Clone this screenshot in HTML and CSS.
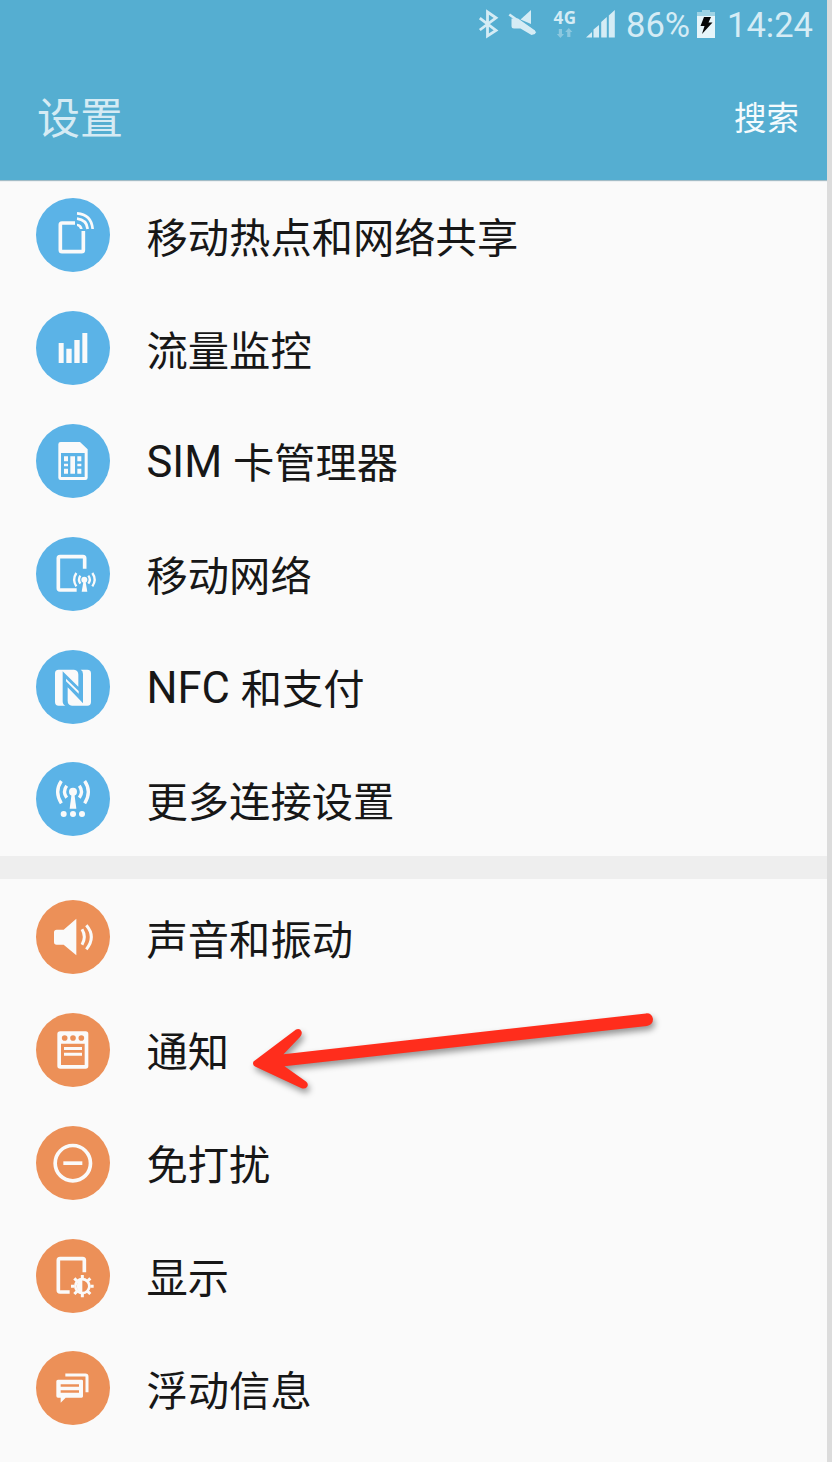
FILE: index.html
```html
<!DOCTYPE html>
<html lang="zh-CN">
<head>
<meta charset="utf-8">
<title>设置</title>
<link rel="stylesheet" href="styles.css">
</head>
<body>
<div class="phone">
  <header class="header">
    <div class="status">
      <svg class="status-icons" viewBox="470 0 150 50">
        <g class="pale">
          <path class="bt" d="M479.8 18.2L496 30.5L487.5 36V12L496 17.8L479.8 30"/>
          <path d="M531 10V24L520.5 19.500Z"/>
          <path d="M511.500 18.500H518L535 30.500V34L531.500 35L520.500 28.500H514Q511.500 28.500 511.500 26Z"/>
          <path class="slash" d="M509.300 14.500L535.500 33"/>
          <path d="M586 37.5L592 32V37.500ZM593.500 37.500V29.500L599 25V37.500ZM601.200 37.500V22L606.800 17V37.500ZM608.800 37.500V15.500L614.800 10V37.500Z"/>
          <path class="data" d="M558.800 29H562V34H564L560.400 38L556.800 34H558.800ZM567.200 37V32H565.200L568.800 28L572.400 32H570.400V37Z"/>
        </g>
        <text class="net" x="553.500" y="24" textLength="22.500">4G</text>
      </svg>
      <span class="percent">86%</span>
      <svg class="battery" viewBox="0 0 20 30">
        <path class="cap" d="M1 2H6V0H14V2H19V7H1Z"/>
        <path class="cell" d="M1 6H19V28H1Z"/>
        <path class="bolt" d="M8 7H15L12.500 12.500H16.500L6 24L8.500 16H4.500Z"/>
      </svg>
      <span class="time">14:24</span>
    </div>
    <div class="titlebar"><h1 class="title">设置</h1><a class="search">搜索</a></div>
  </header>
  <main>
    <section class="list blue">
      <div class="row"><svg class="icon" viewBox="30 24 222 222">
        <circle class="disc" cx="141" cy="135" r="111"/>
        <path class="line w11" d="M147 99H108Q103 99 103 104V180Q103 185 108 185H167Q172 185 172 180V123"/>
        <path class="line w8" d="M153 86Q182 89 185 117M153 70Q196 73 200 117"/>
        <path class="solid" d="M153 101Q168 102 170 117H162Q160 109 153 108Z"/>
      </svg><span class="label">移动热点和网络共享</span></div>
      <div class="row"><svg class="icon" viewBox="30 363 222 222">
        <circle class="disc" cx="141" cy="474" r="111"/>
        <path class="solid" d="M98 459H113V519H98ZM121 476H137V519H121ZM145 450H161V519H145ZM169 429H184V519H169Z"/>
      </svg><span class="label">流量监控</span></div>
      <div class="row"><svg class="icon" viewBox="30 23 222 222">
        <circle class="disc" cx="141" cy="134" r="111"/>
        <path class="solid" fill-rule="evenodd" d="M104 77H162L185 99V184Q185 191 178 191H104Q97 191 97 184V84Q97 77 104 77ZM105 110V182H176V110Z"/>
        <path class="solid" d="M114 120H126V135H114ZM114 142H126V150H114ZM114 157H126V172H114ZM133 120H147V172H133ZM154 120H166V135H154ZM154 142H166V150H154ZM154 157H166V172H154Z"/>
      </svg><span class="label"><span class="latin">SIM </span>卡管理器</span></div>
      <div class="row"><svg class="icon" viewBox="30 362 222 222">
        <circle class="disc" cx="141" cy="473" r="111"/>
        <path class="line w11" d="M176 457V426Q176 421 171 421H102Q97 421 97 426V515Q97 521 102 521H152"/>
        <circle class="solid" cx="175" cy="490" r="9"/>
        <path class="solid" d="M173 492H178L184 526H167Z"/>
        <path class="line w7" d="M163 478Q155 490 163 502M151 470Q138 490 151 510M187 478Q196 490 187 502M199 470Q213 490 199 510"/>
      </svg><span class="label">移动网络</span></div>
      <div class="row"><svg class="icon" viewBox="30 21 222 222">
        <circle class="disc" cx="141" cy="132" r="111"/>
        <g class="solid" transform="translate(72 65)">
          <path d="M26 15H72Q85 16 85 30V66L38 20V110Q38 120 46 123H26Q15 123 15 112V26Q15 15 26 15Z"/>
          <path d="M92 15H112Q123 15 123 26V112Q123 123 112 123H66Q53 122 53 108V68L99 116V28Q99 18 92 15Z"/>
          <path d="M48 42L86 79V87L48 50Z"/>
        </g>
      </svg><span class="label"><span class="latin">NFC </span>和支付</span></div>
      <div class="row"><svg class="icon" viewBox="30 360 222 222">
        <circle class="disc" cx="141" cy="471" r="111"/>
        <circle class="solid" cx="141" cy="449" r="12"/>
        <path class="solid" d="M137 454H145L151 500H131Z"/>
        <path class="line w10" d="M122 431Q109 449 122 467M106 417Q84 449 106 484M160 431Q173 449 160 467M176 417Q198 449 176 484"/>
        <circle class="solid" cx="113" cy="516" r="9"/><circle class="solid" cx="141" cy="516" r="9"/><circle class="solid" cx="168" cy="516" r="9"/>
      </svg><span class="label">更多连接设置</span></div>
    </section>
    <div class="divider"></div>
    <section class="list orange">
      <div class="row"><svg class="icon" viewBox="30 24 222 222">
        <circle class="disc" cx="141" cy="135" r="111"/>
        <path class="solid" d="M92 113H113L151 80V190L113 158H92Q84 158 84 150V121Q84 113 92 113Z"/>
        <path class="line w9" d="M168 112Q182 135 168 158M181 100Q211 135 181 172"/>
      </svg><span class="label">声音和振动</span></div>
      <div class="row"><svg class="icon" viewBox="30 363 222 222">
        <circle class="disc" cx="141" cy="474" r="111"/>
        <path class="solid" fill-rule="evenodd" d="M103 418H179Q187 418 187 426V522Q187 530 179 530H103Q94 530 94 522V426Q94 418 103 418ZM105 455V519H176V455Z"/>
        <path class="solid" d="M114 465H168V474H114ZM114 482H168V491H114Z"/>
        <circle class="disc" cx="116" cy="438" r="8.500"/><circle class="disc" cx="141" cy="438" r="8.500"/><circle class="disc" cx="166" cy="438" r="8.500"/>
      </svg><span class="label">通知</span>
        <svg class="arrow" viewBox="0 0 430 110">
          <path d="M13.500 61.500L56 29.500Q60 28 61.500 31.500Q62.500 34 60 37L43.500 54.300L406 13.400Q412 13 413 19Q413 24.500 407 26L44.500 66.300L66 81.500Q69 84 67 87Q65 89.500 61 88L15 66.500Q12 64.500 13.500 61.500Z"/>
        </svg></div>
      <div class="row"><svg class="icon" viewBox="30 23 222 222">
        <circle class="disc" cx="141" cy="134" r="111"/>
        <circle class="line w11" cx="140.500" cy="134.500" r="53"/>
        <path class="solid" d="M112 129H169V140H112Z"/>
      </svg><span class="label">免打扰</span></div>
      <div class="row"><svg class="icon" viewBox="30 362 222 222">
        <circle class="disc" cx="141" cy="473" r="111"/>
        <path class="line w11" d="M175 462V426Q175 421 170 421H102Q97 421 97 426V515Q97 521 102 521H131"/>
        <path class="line w9" d="M169 470V480M169 527V537M135 503.500H145M193 503.500H203M145 480L153 488M193 480L185 488M145 527L153 519M193 527L185 519"/>
        <circle class="line w8" cx="169" cy="503.500" r="21"/>
        <path class="solid" d="M169 483A21 21 0 0 0 169 524Z"/>
      </svg><span class="label">显示</span></div>
      <div class="row"><svg class="icon" viewBox="30 22 222 222">
        <circle class="disc" cx="141" cy="133" r="111"/>
        <path class="solid" fill-rule="evenodd" d="M96 108H167Q171 108 171 112V158Q171 162 167 162H119L104 177V162H96Q91 162 91 157V113Q91 108 96 108ZM104 122V129H159V122ZM104 140V147H159V140Z"/>
        <path class="line w9" d="M118 94H178Q183 94 183 99V146"/>
      </svg><span class="label">浮动信息</span></div>
    </section>
  </main>
</div>
</body>
</html>
```
FILE: styles.css
```css
body {
  margin: 0;
  background: #dcdcdc;
  font-family: Roboto, "Noto Sans CJK SC", sans-serif;
}
.phone {
  width: 827px;
  height: 1462px;
  overflow: hidden;
  background: #fafafa;
}
.header {
  position: relative;
  z-index: 1;
  height: 180px;
  margin-bottom: -1px;
  background: #55aed1;
  box-shadow: 0 1px 1px #a3bcc6;
}
.status {
  display: flex;
  justify-content: flex-end;
  height: 50px;
  padding-right: 14px;
  color: #d5ecf5;
  font-size: 34.500px;
  line-height: 51px;
}
.status-icons { width: 150px; height: 50px; margin-right: 6px; }
.pale { fill: #d5ecf5; }
.bt { fill: none; stroke: #d5ecf5; stroke-width: 2.800; }
.slash { stroke: #d5ecf5; stroke-width: 2.500; }
.data { fill: #8cc8df; }
.net { fill: #d5ecf5; font: bold 17px "Open Sans", sans-serif; }
.battery { width: 20px; height: 30px; margin: 10px 11px 0 6px; }
.cap { fill: #9ed3e5; }
.cell { fill: #e7f5fa; }
.bolt { fill: #080808; }
.titlebar {
  display: flex;
  justify-content: space-between;
  align-items: center;
  height: 130px;
  padding: 0 28px 0 37px;
}
.title { margin: 0; color: #d5ebf4; font-size: 43px; font-weight: 400; }
.search { color: #f5fbfd; font-size: 32.500px; }
.row {
  position: relative;
  display: flex;
  align-items: center;
  gap: 36.500px;
  height: 112.800px;
  padding-left: 36px;
}
.icon { width: 74px; height: 74px; flex: none; }
.label { padding-top: 7px; color: #171717; font-size: 41.300px; line-height: 60px; white-space: pre; }
.latin { font-size: 43.500px; line-height: 1; vertical-align: 1px; }
.blue { --disc: #5bb3e7; }
.orange { --disc: #ec9058; }
.disc { fill: var(--disc); }
.solid { fill: #fafafa; }
.line { fill: none; stroke: #fafafa; }
.w7 { stroke-width: 7; }
.w8 { stroke-width: 8; }
.w9 { stroke-width: 9; }
.w10 { stroke-width: 10; }
.w11 { stroke-width: 11; }
.divider { height: 23.400px; margin-bottom: 1.600px; background: #eee; }
.arrow {
  position: absolute;
  left: 240px;
  top: 6.500px;
  width: 430px;
  height: 110px;
  fill: #ff2d1c;
  filter: drop-shadow(2px 4px 3px rgba(0, 0, 0, .4));
}
```
